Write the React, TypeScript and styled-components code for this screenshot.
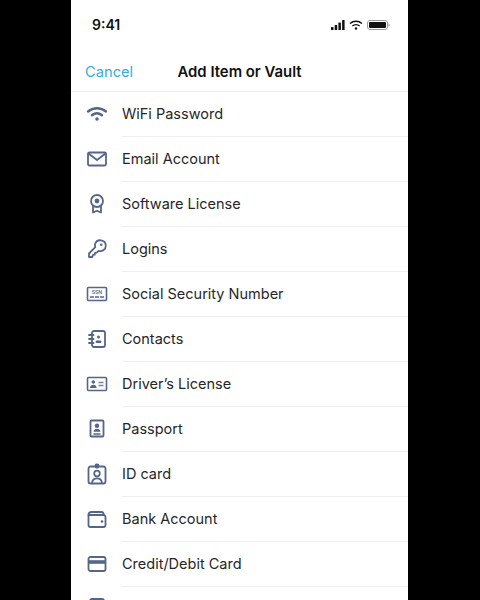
import React from "react";
import styled, { createGlobalStyle } from "styled-components";

const INK = "#56658a";

const Global = createGlobalStyle`
    html, body {
        margin: 0;
        padding: 0;
        height: 100%;
        background: #000;
        overflow: hidden;
    }
    #root {
        height: 100%;
    }
`;

const Page = styled.div`
    display: flex;
    justify-content: center;
    height: 600px;
    padding-right: 1px;
    background: #000;
`;
const Phone = styled.div`
    width: 337px;
    height: 600px;
    overflow: hidden;
    background: #fff;
    font-family: Inter, "Liberation Sans", sans-serif;
    color: #1c1c1e;
`;
const StatusBar = styled.div`
    display: flex;
    align-items: center;
    justify-content: space-between;
    height: 49px;
    padding: 0 18px 0 21px;
    box-sizing: border-box;
`;
const Time = styled.span`
    font-size: 14px;
    font-weight: 600;
    color: #111;
`;
const StatusIcons = styled.div`
    display: flex;
    align-items: center;
    gap: 4px;
`;
const NavBar = styled.div`
    position: relative;
    display: flex;
    align-items: center;
    justify-content: center;
    height: 43px;
    padding-top: 3px;
    border-bottom: 1px solid #eeeeef;
    box-sizing: border-box;
`;
const Cancel = styled.span`
    position: absolute;
    left: 14px;
    font-size: 14.7px;
    color: #35ade3;
`;
const Title = styled.span`
    font-size: 14.9px;
    font-weight: 600;
    color: #111;
`;
const List = styled.div`
    display: flex;
    flex-direction: column;
`;
const Row = styled.div`
    display: flex;
    align-items: center;
    height: 45px;
    flex-shrink: 0;
`;
const IconSlot = styled.div`
    display: flex;
    align-items: center;
    justify-content: center;
    width: 51px;
    padding-bottom: 2px;
    box-sizing: border-box;
    flex-shrink: 0;
`;
const Label = styled.div`
    display: flex;
    align-items: center;
    flex: 1;
    height: 100%;
    padding-bottom: 2px;
    font-size: 14.5px;
    color: #26262a;
    border-bottom: 1px solid #efeff0;
    box-sizing: border-box;
`;

const Icon = ({ children }: { children: React.ReactNode }) => (
    <svg
        width="24"
        height="24"
        viewBox="0 0 24 24"
        fill="none"
        stroke={INK}
        strokeWidth="1.8"
        strokeLinecap="round"
        strokeLinejoin="round"
    >
        {children}
    </svg>
);

const ITEMS: { id: number; label: string; icon: React.ReactNode }[] = [
    {
        id: 1,
        label: "WiFi Password",
        icon: (
            <Icon>
                <path d="M3 9.5c5.2-4.4 12.800-4.4 18 0" strokeWidth="2.4" />
                <path d="M7 13.300c3-2.400 7-2.400 10 0" strokeWidth="2.4" />
                <circle cx="12" cy="17" r="1.8" fill={INK} stroke="none" />
            </Icon>
        ),
    },
    {
        id: 2,
        label: "Email Account",
        icon: (
            <Icon>
                <rect x="3" y="5.5" width="18" height="13" rx="1.5" />
                <path d="M3.5 6.500l8.500 6.500 8.500-6.500" />
            </Icon>
        ),
    },
    {
        id: 3,
        label: "Software License",
        icon: (
            <Icon>
                <circle cx="12" cy="9" r="6" />
                <circle cx="12" cy="9" r="2.4" fill={INK} stroke="none" />
                <path d="M8 14.500V20.500l4-1.800 4 1.800v-6" />
            </Icon>
        ),
    },
    {
        id: 4,
        label: "Logins",
        icon: (
            <Icon>
                <path d="M20.800 8.500a5.500 5.500 0 0 0-10.700-1.500c-.3 1.100-.2 2.200.2 3.200l-6.300 6.300v3.500h3.400l.4-1.900 1.900-.4.4-1.900 1.800-.3 1.600-1.700a5.500 5.500 0 0 0 7.300-5.300z" />
                <circle cx="16.2" cy="7.8" r="1.3" fill={INK} stroke="none" />
            </Icon>
        ),
    },
    {
        id: 5,
        label: "Social Security Number",
        icon: (
            <svg width="24" height="24" viewBox="0 0 24 24" fill="none" stroke={INK}>
                <rect x="2.5" y="5.5" width="19" height="13" rx="1" strokeWidth="1.6" />
                <text x="12" y="12" textAnchor="middle" fontSize="5" fontWeight="600" fill={INK} stroke="none">
                    SSN
                </text>
                <path d="M5 15h4M10 15h4M15 15h4" strokeWidth="1.5" />
            </svg>
        ),
    },
    {
        id: 6,
        label: "Contacts",
        icon: (
            <Icon>
                <rect x="7" y="4" width="13" height="16" rx="2" />
                <path d="M4 8h4.500M4 12h4.500M4 16h4.500" />
                <circle cx="13.5" cy="10" r="1.5" fill={INK} stroke="none" />
                <path d="M11.800 14.800h3.400" strokeWidth="2.4" />
            </Icon>
        ),
    },
    {
        id: 7,
        label: "Driver’s License",
        icon: (
            <svg width="24" height="24" viewBox="0 0 24 24" fill="none" stroke={INK}>
                <rect x="2.5" y="5.5" width="19" height="13" rx="1" strokeWidth="1.6" />
                <circle cx="8.3" cy="10" r="1.8" fill={INK} stroke="none" />
                <path d="M5 16c.2-2.400 1.500-3.300 3.300-3.300s3.100.9 3.300 3.300z" fill={INK} stroke="none" />
                <path d="M13.500 10.500h5M13.500 13.500h5" strokeWidth="1.4" opacity=".8" />
            </svg>
        ),
    },
    {
        id: 8,
        label: "Passport",
        icon: (
            <Icon>
                <rect x="5.5" y="3.5" width="13" height="16" rx="1" />
                <circle cx="12" cy="8.8" r="2.2" fill={INK} stroke="none" />
                <path d="M8.500 14.800c.3-2.200 1.700-3 3.500-3s3.200.8 3.500 3z" fill={INK} stroke="none" />
                <path d="M9 17h6" strokeWidth="1.5" />
            </Icon>
        ),
    },
    {
        id: 9,
        label: "ID card",
        icon: (
            <Icon>
                <path d="M9.500 4.500H5.500a2 2 0 0 0-2 2V19.500a2 2 0 0 0 2 2h13a2 2 0 0 0 2-2V6.500a2 2 0 0 0-2-2h-4" />
                <rect x="10.5" y="2.5" width="3" height="3" rx="1" fill={INK} />
                <circle cx="12" cy="11.5" r="2.8" />
                <path d="M7 21c.4-3.200 2.300-4.700 5-4.700s4.600 1.500 5 4.700" />
            </Icon>
        ),
    },
    {
        id: 10,
        label: "Bank Account",
        icon: (
            <Icon>
                <path d="M3.500 8v10a2 2 0 0 0 2 2h13a2 2 0 0 0 2-2V10a2 2 0 0 0-2-2h-15" />
                <path d="M3.500 8c0-2 1-3 3-3h10c1.500 0 2.200.8 2.200 3" />
                <circle cx="17" cy="14.5" r="1.3" fill={INK} stroke="none" />
            </Icon>
        ),
    },
    {
        id: 11,
        label: "Credit/Debit Card",
        icon: (
            <Icon>
                <rect x="3.5" y="5" width="17" height="14" rx="2" />
                <path d="M3.500 10h17" strokeWidth="3.6" strokeLinecap="butt" />
            </Icon>
        ),
    },
    {
        id: 12,
        label: "",
        icon: (
            <Icon>
                <rect x="5" y="2" width="14" height="18" rx="2" />
            </Icon>
        ),
    },
];

export default function App() {
    return (
        <Page>
            <Global />
            <Phone>
                <StatusBar>
                    <Time>9:41</Time>
                    <StatusIcons>
                        <svg width="14" height="10" viewBox="0 0 14 10" fill="#111">
                            <rect x="0" y="7" width="2.5" height="3" rx=".5" />
                            <rect x="3.7" y="5" width="2.5" height="5" rx=".5" />
                            <rect x="7.4" y="2.5" width="2.5" height="7.5" rx=".5" />
                            <rect x="11.1" y="0" width="2.5" height="10" rx=".5" />
                        </svg>
                        <svg width="14" height="10" viewBox="0 0 14 10" fill="none" stroke="#111" strokeWidth="1.5">
                            <path d="M1 3.500c3.400-3 8.600-3 12 0" />
                            <path d="M3.400 6c2-1.800 5.200-1.800 7.200 0" />
                            <circle cx="7" cy="8.5" r="1.2" fill="#111" stroke="none" />
                        </svg>
                        <svg width="23" height="10" viewBox="0 0 23 10" fill="none">
                            <rect x=".5" y=".5" width="20" height="9" rx="2.5" stroke="#999" />
                            <rect x="2" y="2" width="17" height="6" rx="1" fill="#111" />
                            <path d="M21.500 3.300c.8.300 1.200.9 1.200 1.700s-.4 1.400-1.200 1.700z" fill="#999" />
                        </svg>
                    </StatusIcons>
                </StatusBar>
                <NavBar>
                    <Cancel>Cancel</Cancel>
                    <Title>Add Item or Vault</Title>
                </NavBar>
                <List>
                    {ITEMS.map((e) => (
                        <Row key={e.id}>
                            <IconSlot>{e.icon}</IconSlot>
                            <Label>{e.label}</Label>
                        </Row>
                    ))}
                </List>
            </Phone>
        </Page>
    );
}
